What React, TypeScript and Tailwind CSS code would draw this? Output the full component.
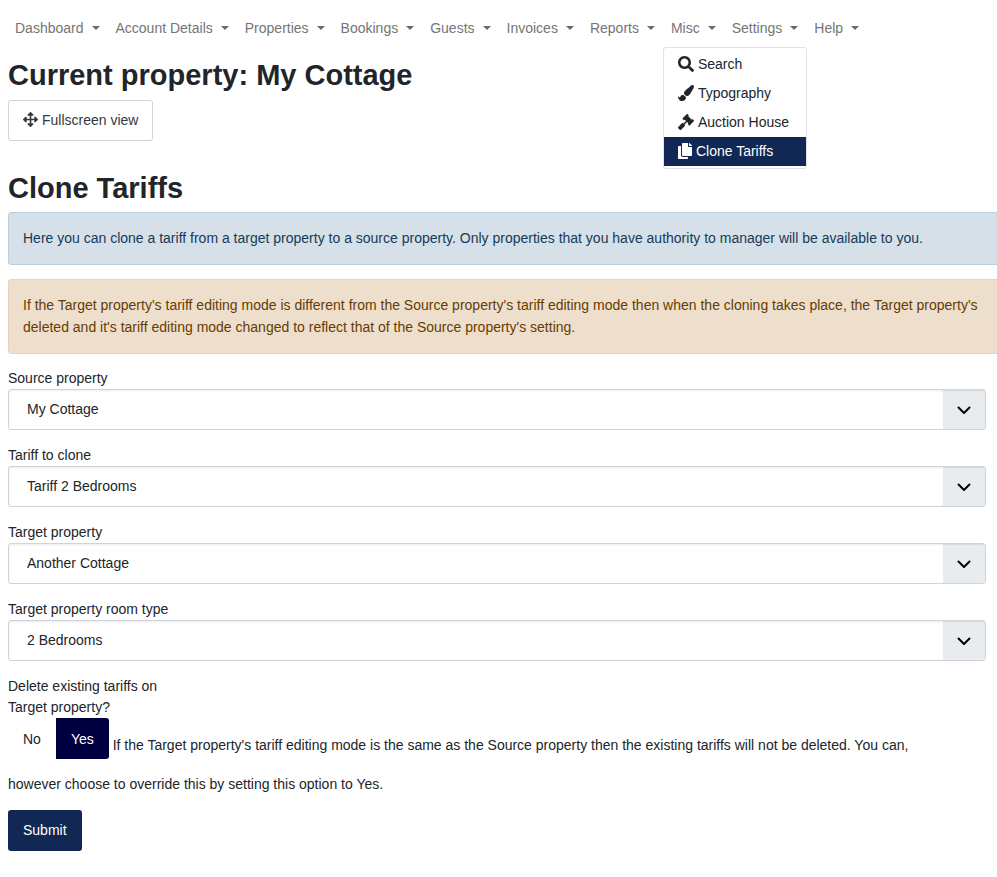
import { useState, type ReactNode } from 'react';
import { FaArrowsAlt, FaCopy, FaGavel, FaPaintBrush, FaSearch } from 'react-icons/fa';

const before = ['Dashboard', 'Account Details', 'Properties', 'Bookings', 'Guests', 'Invoices', 'Reports'];
const after = ['Settings', 'Help'];

const miscItems = [
  { label: 'Search', icon: <FaSearch className="size-4" />, active: false },
  { label: 'Typography', icon: <FaPaintBrush className="size-4" />, active: false },
  { label: 'Auction House', icon: <FaGavel className="size-4" />, active: false },
  { label: 'Clone Tariffs', icon: <FaCopy className="h-4 w-[14px]" />, active: true },
];

function NavItem({ label, children }: { label: string; children?: ReactNode }) {
  return (
    <li className="relative">
      <button
        type="button"
        aria-expanded={children ? true : false}
        className="flex items-center gap-2 px-2 text-[#757575]"
      >
        {label}
        <span className="border-x-4 border-t-4 border-x-transparent border-t-[#6b6b6b]" />
      </button>
      {children}
    </li>
  );
}

function SelectField({ id, label, value }: { id: string; label: string; value: string }) {
  return (
    <div className="mb-[14px]">
      <label htmlFor={id} className="block">
        {label}
      </label>
      <div className="relative">
        <select
          id={id}
          className="block h-[41px] w-full appearance-none rounded-[3px] border border-[#ced4da] bg-white pr-12 pb-[2px] pl-[18px] shadow-[inset_0_1px_2px_rgba(0,0,0,0.08)]"
        >
          <option>{value}</option>
        </select>
        <span className="pointer-events-none absolute inset-y-px right-px flex w-[42px] items-center justify-center rounded-r-[2px] bg-[#e9ecef] pr-px shadow-[inset_0_2px_1px_-1px_rgba(0,0,0,0.08)]">
          <svg viewBox="0 0 16 16" className="size-4" fill="none" stroke="#000" strokeWidth="2" strokeLinecap="round" strokeLinejoin="round">
            <path d="M2.5 5.5l5.5 5.5 5.5-5.5" />
          </svg>
        </span>
      </div>
    </div>
  );
}

export default function App() {
  const [remove, setRemove] = useState(true);

  return (
    <div className="overflow-hidden bg-white pr-[11px] pb-6 pl-2 font-['Liberation_Sans',Arial,sans-serif] text-[14px] leading-[22px] text-[#212529]">
      <nav className="pt-[17px] pb-[18px]">
        <ul className="-ml-px flex">
          {before.map((label) => (
            <NavItem key={label} label={label} />
          ))}
          <NavItem label="Misc">
            <ul className="absolute top-[30px] left-0 z-10 w-[144px] rounded-[3px] border border-[#dee2e6] bg-white py-[2px]">
              {miscItems.map((item) => (
                <li key={item.label}>
                  <a
                    href="#"
                    className={
                      item.active
                        ? 'flex items-center gap-1 bg-[#112855] px-[14px] pt-[3px] pb-1 whitespace-nowrap text-white'
                        : 'flex items-center gap-1 px-[14px] pt-[3px] pb-1 whitespace-nowrap'
                    }
                  >
                    {item.icon}
                    {item.label}
                  </a>
                </li>
              ))}
            </ul>
          </NavItem>
          {after.map((label) => (
            <NavItem key={label} label={label} />
          ))}
        </ul>
      </nav>

      <h2 className="mb-[7px] text-[29px] leading-9 font-bold">Current property: My Cottage</h2>
      <button
        type="button"
        className="flex h-[41px] items-center gap-1 rounded-[3px] border border-[#ced4da] px-[14px] pb-[2px] text-[#343a40]"
      >
        <FaArrowsAlt className="size-[15px]" />
        Fullscreen view
      </button>

      <main className="pt-[29px]">
        <h2 className="mb-[6px] text-[29px] leading-9 font-bold">Clone Tariffs</h2>

        <div className="-mr-40 mb-[14px] rounded-[3px] border border-[#bccddb] bg-[#d5e0e9] px-[14px] pt-[14px] pb-[15px] text-[#173a58]">
          Here you can clone a tariff from a target property to a source property. Only properties that you have
          authority to manager will be available to you.
        </div>
        <div className="-mr-40 mb-[13px] rounded-[3px] border border-[#e9d3b5] bg-[#eedfcc] px-[14px] pt-[14px] pb-[15px] text-[#663c00]">
          If the Target property's tariff editing mode is different from the Source property's tariff editing mode then
          when the cloning takes place, the Target property's
          <br />
          deleted and it's tariff editing mode changed to reflect that of the Source property's setting.
        </div>

        <form onSubmit={(event) => event.preventDefault()}>
          <SelectField id="source" label="Source property" value="My Cottage" />
          <SelectField id="tariff" label="Tariff to clone" value="Tariff 2 Bedrooms" />
          <SelectField id="target" label="Target property" value="Another Cottage" />
          <SelectField id="room" label="Target property room type" value="2 Bedrooms" />

          <div id="delete-label" className="w-[170px] pt-px leading-[21px]">
            Delete existing tariffs on Target property?
          </div>
          <div className="mb-[17px] leading-[18px]">
            <span role="radiogroup" aria-labelledby="delete-label" className="relative mb-4 inline-flex align-middle">
              <label
                className={
                  remove
                    ? 'flex h-[41px] items-center rounded-l-[3px] px-[15px]'
                    : 'flex h-[41px] items-center rounded-l-[3px] bg-[#000040] px-[15px] text-white'
                }
              >
                <input type="radio" name="delete" className="sr-only" checked={!remove} onChange={() => setRemove(false)} />
                No
              </label>
              <label
                className={
                  remove
                    ? 'flex h-[41px] items-center rounded-r-[3px] bg-[#000040] px-[15px] text-white'
                    : 'flex h-[41px] items-center rounded-r-[3px] px-[15px]'
                }
              >
                <input type="radio" name="delete" className="sr-only" checked={remove} onChange={() => setRemove(true)} />
                Yes
              </label>
            </span>{' '}
            If the Target property's tariff editing mode is the same as the Source property then the existing tariffs
            will not be deleted. You can,
            <br />
            however choose to override this by setting this option to Yes.
          </div>
          <button type="submit" className="h-[41px] rounded-[3px] bg-[#112855] px-[15px] pb-[2px] text-white">
            Submit
          </button>
        </form>
      </main>
    </div>
  );
}
